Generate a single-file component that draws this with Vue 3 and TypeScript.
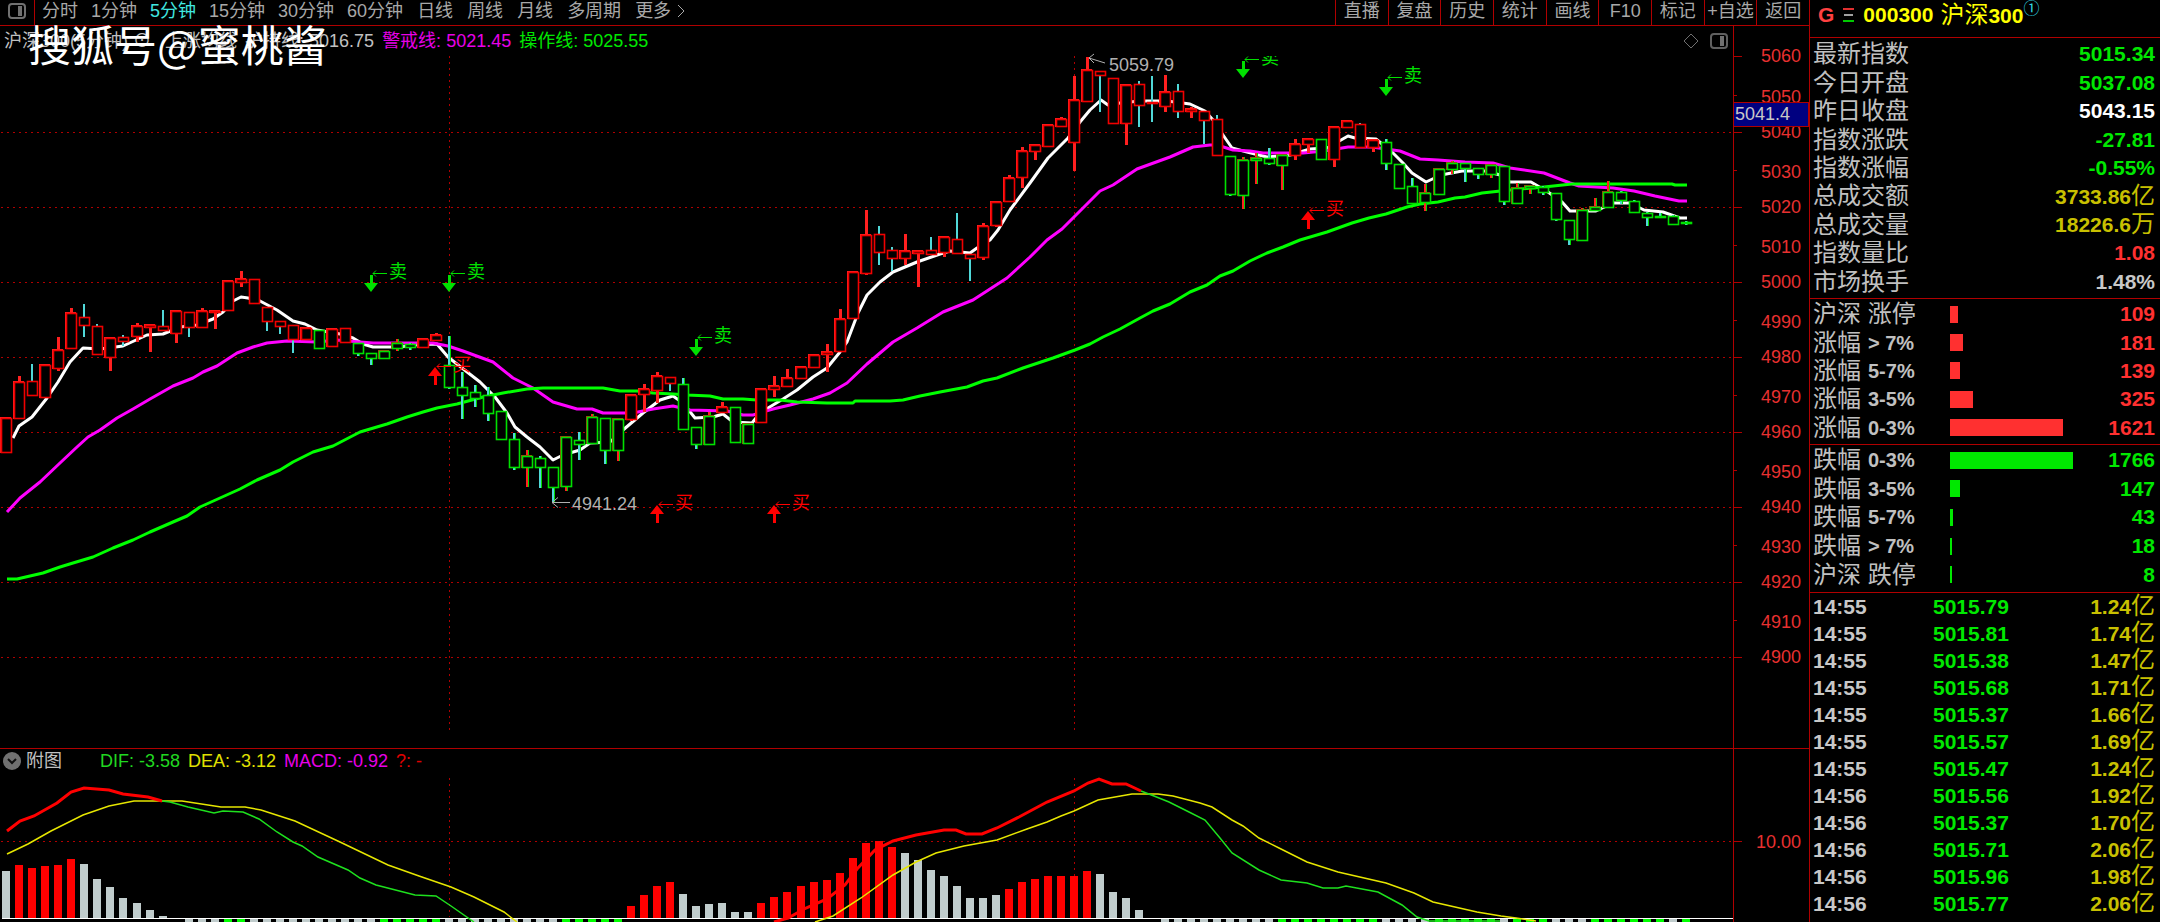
<script setup lang="ts">
type Kind = 'rr' | 'rc' | 'gc' | 'gr'
type Candle = [top: number, bottom: number, high: number, low: number, kind: Kind]
type Tone = 'up' | 'down'

const periodsShort = ['分时', '1分钟', '5分钟', '15分钟', '30分钟', '60分钟']
const periodsLong = ['日线', '周线', '月线', '多周期']
const tools = ['直播', '复盘', '历史', '统计', '画线', 'F10', '标记', '+自选', '返回']

const step = 13.02
const cx = (i: number): number => Math.round(6.3 + i * step)

const candles: Candle[] = [
  [418, 452, 417, 452, 'rr'], [382, 418, 376, 418, 'rr'], [381, 395, 364, 395, 'rc'], [365, 397, 364, 397, 'rr'],
  [350, 368, 337, 371, 'rr'], [313, 348, 308, 348, 'rr'], [317, 325, 304, 337, 'rc'], [326, 354, 324, 354, 'rc'],
  [338, 357, 337, 371, 'rr'], [337, 341, 335, 346, 'rc'], [326, 336, 323, 342, 'rr'], [325, 327, 325, 352, 'rr'],
  [326, 330, 310, 330, 'rc'], [311, 333, 311, 343, 'rr'], [312, 327, 312, 337, 'rc'], [311, 327, 308, 327, 'rr'],
  [311, 312, 311, 329, 'rr'], [281, 310, 281, 310, 'rr'], [279, 282, 271, 287, 'rr'], [279, 303, 279, 303, 'rc'],
  [307, 321, 307, 331, 'rc'], [321, 326, 321, 334, 'rc'], [325, 339, 325, 353, 'rc'], [328, 339, 328, 339, 'rr'],
  [330, 348, 330, 348, 'gc'], [329, 346, 329, 347, 'rr'], [328, 342, 328, 342, 'rc'], [343, 353, 343, 356, 'gc'],
  [353, 358, 353, 365, 'gc'], [351, 358, 350, 358, 'gr'], [343, 348, 339, 351, 'gr'], [344, 347, 343, 350, 'gc'],
  [339, 347, 339, 348, 'rr'], [335, 340, 333, 340, 'rr'], [365, 387, 336, 389, 'gc'], [387, 395, 372, 419, 'gc'],
  [392, 398, 385, 407, 'gc'], [395, 413, 387, 421, 'gc'], [411, 439, 411, 439, 'gc'], [439, 467, 433, 470, 'gc'],
  [456, 467, 450, 487, 'gr'], [458, 467, 456, 488, 'gc'], [467, 487, 467, 503, 'gc'], [437, 486, 436, 491, 'gr'],
  [440, 444, 432, 460, 'gc'], [417, 443, 414, 443, 'gr'], [418, 450, 418, 464, 'gc'], [419, 450, 418, 461, 'gr'],
  [395, 419, 394, 421, 'rr'], [389, 394, 384, 412, 'rr'], [376, 390, 372, 403, 'rr'], [377, 383, 377, 391, 'rc'],
  [384, 429, 378, 429, 'gc'], [427, 444, 427, 449, 'gc'], [416, 444, 412, 444, 'gr'], [407, 412, 402, 412, 'rr'],
  [407, 442, 407, 443, 'gc'], [424, 443, 424, 444, 'gr'], [389, 422, 388, 422, 'rr'], [386, 389, 376, 397, 'rr'],
  [378, 386, 369, 386, 'rr'], [367, 378, 366, 379, 'rr'], [355, 367, 354, 367, 'rr'], [352, 354, 344, 372, 'rr'],
  [319, 351, 309, 351, 'rr'], [272, 318, 271, 318, 'rr'], [235, 273, 210, 275, 'rr'], [234, 252, 226, 265, 'rc'],
  [250, 258, 247, 271, 'rc'], [251, 258, 234, 265, 'rr'], [251, 253, 251, 287, 'rr'], [250, 254, 237, 254, 'rc'],
  [237, 252, 236, 257, 'rr'], [239, 253, 213, 253, 'rc'], [254, 258, 254, 281, 'rc'], [226, 257, 223, 260, 'rr'],
  [202, 225, 201, 227, 'rr'], [178, 201, 175, 201, 'rr'], [151, 177, 147, 188, 'rr'], [145, 151, 144, 160, 'rr'],
  [125, 146, 124, 146, 'rr'], [119, 126, 117, 126, 'rr'], [100, 142, 76, 171, 'rr'], [70, 101, 57, 101, 'rr'],
  [71, 75, 71, 112, 'rc'], [78, 123, 78, 123, 'rc'], [85, 123, 84, 145, 'rr'], [84, 105, 81, 127, 'rc'],
  [102, 103, 76, 122, 'rc'], [92, 106, 75, 112, 'rr'], [91, 111, 84, 118, 'rc'], [109, 111, 107, 118, 'rr'],
  [111, 120, 111, 144, 'rc'], [119, 155, 115, 155, 'rc'], [156, 194, 156, 196, 'gc'], [160, 195, 157, 209, 'gr'],
  [158, 160, 153, 184, 'gr'], [158, 163, 148, 165, 'gc'], [155, 165, 155, 190, 'gr'], [144, 155, 139, 160, 'rr'],
  [139, 144, 138, 153, 'rr'], [139, 159, 139, 159, 'gc'], [127, 159, 126, 167, 'rr'], [121, 127, 120, 127, 'rr'],
  [124, 147, 123, 147, 'rc'], [140, 147, 140, 152, 'rr'], [142, 163, 139, 170, 'gc'], [164, 188, 164, 188, 'gc'],
  [186, 203, 178, 203, 'gc'], [193, 202, 184, 211, 'gr'], [169, 194, 168, 194, 'gr'], [163, 169, 161, 174, 'gr'],
  [163, 168, 163, 182, 'gc'], [168, 174, 168, 179, 'gc'], [165, 174, 164, 178, 'gr'], [166, 201, 166, 205, 'gc'],
  [188, 203, 183, 203, 'gr'], [186, 188, 185, 194, 'gr'], [187, 192, 186, 195, 'gc'], [193, 219, 193, 221, 'gc'],
  [220, 239, 220, 245, 'gc'], [210, 240, 208, 240, 'gr'], [207, 210, 198, 210, 'gr'], [192, 207, 181, 207, 'gr'],
  [192, 200, 191, 204, 'gc'], [201, 212, 200, 212, 'gc'], [213, 217, 212, 226, 'gc'], [216, 217, 213, 217, 'gc'],
  [216, 224, 215, 224, 'gc'], [222, 223, 221, 225, 'gc'],
]

const warnLine =
  '7,512 20,498 40,482 60,463 77,447 88,437 100,430 117,418 133,409 150,399 173,386 193,378 203,372 217,366 237,353 253,347 267,343 287,341 317,342 337,340 360,342 373,343 433,343 448,346 463,351 493,362 513,378 533,388 553,402 577,409 592,409 603,413 633,413 653,409 673,406 690,410 727,411 743,415 753,415 773,409 790,405 813,399 830,393 847,383 867,364 893,342 917,328 943,312 973,300 1007,278 1030,257 1047,240 1062,229 1075,216 1100,191 1113,185 1137,169 1170,157 1193,147 1210,145 1217,145 1233,150 1250,151 1263,153 1303,153 1324,151 1348,147 1372,147 1400,151 1420,159 1438,160 1465,162 1493,163 1510,168 1544,173 1570,183 1579,186 1613,188 1634,191 1655,196 1679,201 1687,201'
const actLine =
  '7,579 17,579 43,573 60,567 73,563 93,557 113,548 133,540 150,532 173,522 187,516 200,507 220,498 240,489 257,480 280,470 293,462 313,452 333,446 360,432 387,424 407,417 423,412 437,408 457,404 483,397 503,393 527,389 543,388 603,388 620,391 637,391 653,393 673,394 687,395 710,396 723,399 743,399 757,400 780,400 797,402 827,403 853,403 855,401 890,401 903,400 920,396 940,392 967,387 983,381 997,378 1023,368 1053,358 1075,350 1090,344 1103,337 1120,329 1140,318 1153,311 1170,304 1190,292 1207,285 1220,276 1233,271 1250,261 1267,253 1283,247 1300,240 1327,232 1352,223 1369,218 1386,214 1407,207 1420,204 1438,202 1455,198 1465,197 1482,193 1510,190 1544,187 1572,184 1672,184 1675,185 1687,185'
const holdLine =
  '13,438 19,426 32,417 47,398 58,382 70,362 83,348 100,349 123,346 147,335 163,334 180,327 197,325 213,319 223,312 233,301 241,297 248,298 260,301 277,310 293,321 305,324 317,330 340,334 353,338 363,344 373,347 400,347 413,345 437,344 448,357 462,368 480,382 495,397 507,413 515,427 527,437 540,447 553,460 563,455 580,450 590,443 610,442 623,430 643,413 660,400 673,396 683,403 695,418 713,417 723,414 733,422 752,423 760,413 773,405 783,399 797,390 813,377 827,368 840,352 847,342 858,313 867,295 880,282 893,272 917,262 940,254 950,251 970,253 977,248 990,240 998,230 1010,210 1030,183 1048,158 1068,138 1080,122 1090,110 1101,100 1108,105 1120,103 1140,101 1167,101 1190,104 1205,111 1213,120 1223,135 1232,148 1247,152 1267,157 1290,155 1310,149 1327,148 1341,140 1348,136 1355,138 1376,139 1393,153 1403,163 1412,173 1426,182 1441,175 1462,171 1486,171 1500,175 1510,182 1531,182 1548,192 1562,202 1570,211 1596,211 1613,203 1630,203 1644,210 1663,212 1680,218 1687,218'

const prices = Array.from({ length: 17 }, (_, k) => {
  const major = k % 2 === 0
  const y = k === 0 ? 56 : Math.round(57 + k * 37.5)
  return { label: 5060 - k * 10, y, major, textY: y + (major ? 6 : 8) }
})
const gridRows = prices.filter((p) => p.major && p.label < 5060)

const sells = [{ x: 371, y: 273 }, { x: 449, y: 273 }, { x: 696, y: 337 }, { x: 1243, y: 59 }, { x: 1386, y: 77 }]
const buys = [{ x: 435, y: 366 }, { x: 657, y: 504 }, { x: 774, y: 504 }, { x: 1308, y: 210 }]

/* Positive bars by index; r = growing, w = shrinking */
const macdTops: [number, number, string][] = [
  [0, 871, 'w'], [1, 865, 'r'], [2, 868, 'r'], [3, 866, 'r'], [4, 865, 'r'], [5, 859, 'r'], [6, 864, 'w'], [7, 879, 'w'],
  [8, 887, 'w'], [9, 898, 'w'], [10, 903, 'w'], [11, 910, 'w'], [12, 916, 'w'],
  [48, 906, 'r'], [49, 895, 'r'], [50, 886, 'r'], [51, 882, 'r'], [52, 894, 'w'], [53, 906, 'w'], [54, 904, 'w'],
  [55, 903, 'w'], [56, 912, 'w'], [57, 912, 'w'], [58, 903, 'r'], [59, 897, 'r'], [60, 892, 'r'], [61, 886, 'r'],
  [62, 882, 'r'], [63, 880, 'r'], [64, 873, 'r'], [65, 858, 'r'], [66, 843, 'r'], [67, 841, 'r'], [68, 847, 'r'],
  [69, 853, 'w'], [70, 860, 'w'], [71, 870, 'w'], [72, 876, 'w'], [73, 886, 'w'], [74, 898, 'w'], [75, 898, 'w'],
  [76, 895, 'w'], [77, 889, 'r'], [78, 882, 'r'], [79, 879, 'r'], [80, 876, 'r'], [81, 876, 'r'], [82, 876, 'r'],
  [83, 871, 'r'], [84, 874, 'w'], [85, 892, 'w'], [86, 898, 'w'], [87, 910, 'w'],
]
const greenRuns: [number, number][] = [[17, 18], [29, 33], [43, 47], [98, 105], [110, 114], [116, 118], [122, 127], [129, 129]]
const positive = new Set(macdTops.map((b) => b[0]))
const negatives = candles
  .map((_, i) => i)
  .filter((i) => !positive.has(i) && i !== 13 && i !== 88)
  .map((i) => ({ i, tone: greenRuns.some(([a, b]) => i >= a && i <= b) ? 'g' : 'w' }))

const difRed = [
  '7,831 20,821 34,816 57,803 71,792 84,788 109,790 123,794 148,797 162,801',
  '774,922 788,918 806,908 827,899 845,885 857,869 875,850 893,841 916,835 944,830 956,830 966,834 982,834 997,828 1019,817 1047,802 1074,791 1088,783 1099,779 1112,784 1126,784 1141,791',
]
const difGreen = [
  '162,801 170,802 188,807 214,813 223,811 243,812 259,819 277,832 293,842 302,846 318,857 348,870 360,878 376,885 415,895 436,896 451,906 474,922',
  '1141,791 1154,796 1169,802 1189,812 1205,820 1220,838 1232,853 1259,870 1281,880 1307,883 1323,888 1338,888 1346,886 1378,892 1402,905 1417,917 1429,921 1500,921',
]
const dea = [
  '7,854 28,844 51,831 83,815 109,806 134,801 182,801 221,807 245,807 261,810 295,821 340,842 388,865 419,876 451,887 474,897 504,912 517,922',
  '815,922 833,916 861,898 893,875 916,862 936,853 964,846 997,840 1027,829 1047,822 1061,816 1074,811 1098,800 1132,794 1158,794 1173,796 1200,803 1212,807 1232,820 1243,826 1259,838 1279,848 1307,862 1338,872 1386,883 1414,893 1433,902 1477,912 1501,916 1516,918 1536,921',
]

const quotes = [
  { name: '最新指数', value: '5015.34', unit: '', tone: 'down' },
  { name: '今日开盘', value: '5037.08', unit: '', tone: 'down' },
  { name: '昨日收盘', value: '5043.15', unit: '', tone: 'white' },
  { name: '指数涨跌', value: '-27.81', unit: '', tone: 'down' },
  { name: '指数涨幅', value: '-0.55%', unit: '', tone: 'down' },
  { name: '总成交额', value: '3733.86', unit: '亿', tone: 'gold' },
  { name: '总成交量', value: '18226.6', unit: '万', tone: 'gold' },
  { name: '指数量比', value: '1.08', unit: '', tone: 'up' },
  { name: '市场换手', value: '1.48%', unit: '', tone: 'grey' },
]

interface Band { name: string; range: string; count: number }
const bands: { tone: Tone; rows: Band[] }[] = [
  {
    tone: 'up',
    rows: [
      { name: '沪深 涨停', range: '', count: 109 },
      { name: '涨幅', range: '> 7%', count: 181 },
      { name: '涨幅', range: '5-7%', count: 139 },
      { name: '涨幅', range: '3-5%', count: 325 },
      { name: '涨幅', range: '0-3%', count: 1621 },
    ],
  },
  {
    tone: 'down',
    rows: [
      { name: '跌幅', range: '0-3%', count: 1766 },
      { name: '跌幅', range: '3-5%', count: 147 },
      { name: '跌幅', range: '5-7%', count: 43 },
      { name: '跌幅', range: '> 7%', count: 18 },
      { name: '沪深 跌停', range: '', count: 8 },
    ],
  },
]
const barWidth = (count: number): string => `${(count / 1766) * 100}%`

const ticks: [string, string, string][] = [
  ['14:55', '5015.79', '1.24'], ['14:55', '5015.81', '1.74'], ['14:55', '5015.38', '1.47'], ['14:55', '5015.68', '1.71'],
  ['14:55', '5015.37', '1.66'], ['14:55', '5015.57', '1.69'], ['14:55', '5015.47', '1.24'], ['14:56', '5015.56', '1.92'],
  ['14:56', '5015.37', '1.70'], ['14:56', '5015.71', '2.06'], ['14:56', '5015.96', '1.98'], ['14:56', '5015.77', '2.06'],
]
</script>

<template>
  <div class="terminal">
    <main class="main">
      <nav class="toolbar">
        <button class="layout-btn" type="button" aria-label="布局">
          <svg width="18" height="16" viewBox="0 0 18 16">
            <rect x="1" y="1" width="16" height="14" rx="3" fill="none" stroke="#707070" stroke-width="2" />
            <rect x="10" y="3" width="4" height="10" fill="#707070" />
          </svg>
        </button>
        <div class="periods">
          <button v-for="p in periodsShort" :key="p" type="button" :class="{ active: p === '5分钟' }">{{ p }}</button>
        </div>
        <div class="periods long">
          <button v-for="p in periodsLong" :key="p" type="button">{{ p }}</button>
          <button class="more" type="button">
            更多
            <svg width="8" height="14" viewBox="0 0 8 14"><path d="M1 1 7 7 1 13" fill="none" stroke="currentColor" /></svg>
          </button>
        </div>
        <div class="tools">
          <button v-for="t in tools" :key="t" type="button">{{ t }}</button>
        </div>
      </nav>

      <section class="chart">
        <header class="chart-head">
          <span class="title">沪深300(5分钟) ⊙</span>
          <span>上涨均线</span>
          <span>护持线: 5016.75</span>
          <span class="magenta">警戒线: 5021.45</span>
          <span class="lime">操作线: 5025.55</span>
          <span class="head-icons">
            <svg width="16" height="16" viewBox="0 0 16 16"><path d="M8 1 15 8 8 15 1 8Z" fill="none" stroke="#707070" /></svg>
            <svg width="18" height="16" viewBox="0 0 18 16">
              <rect x="1" y="1" width="16" height="14" rx="3" fill="none" stroke="#606060" stroke-width="2" />
              <rect x="10" y="3" width="4" height="10" fill="#707070" />
            </svg>
          </span>
          <div class="watermark">搜狐号@蜜桃酱</div>
        </header>
        <svg class="plot" viewBox="0 56 1809 692" role="img" aria-label="K线图">
          <defs><clipPath id="plot-clip"><rect x="0" y="56" width="1733" height="692" /></clipPath></defs>
          <g class="grid">
            <line v-for="g in gridRows" :key="g.label" x1="1" :y1="g.y + 0.5" x2="1733" :y2="g.y + 0.5" />
            <line x1="449.5" y1="56" x2="449.5" y2="732" />
            <line x1="1074.5" y1="56" x2="1074.5" y2="732" />
          </g>
          <g class="curves">
            <polyline :points="holdLine" stroke="#fff" />
            <polyline :points="warnLine" stroke="#f0f" />
            <polyline :points="actLine" stroke="#0f0" />
          </g>
          <g class="candles">
            <g v-for="(c, i) in candles" :key="i" :class="c[4]">
              <rect class="wick" :x="cx(i) - 1" :y="c[2]" width="2" :height="Math.max(c[3] - c[2], 1)" />
              <rect class="wick-edge" :x="cx(i) + 1" :y="c[2]" width="1" :height="Math.max(c[3] - c[2], 1)" />
              <rect class="accent" :x="cx(i) - 6" :y="c[0] - 1" width="11" :height="c[1] - c[0] + 2" />
              <rect class="body" :x="cx(i) - 4.5" :y="c[0] + 0.5" width="10" :height="Math.max(c[1] - c[0], 1)" />
            </g>
          </g>
          <g clip-path="url(#plot-clip)">
            <g v-for="s in sells" :key="s.x" class="sell">
              <path :d="`M${s.x - 1} ${s.y + 2}h3v8h5l-7 9-7-9h6z`" />
              <path class="pointer" :d="`M${s.x + 16} ${s.y + 0.5}h-14m3-3l-3 3 3 3`" />
              <text :x="s.x + 18" :y="s.y + 5">卖</text>
            </g>
            <g v-for="b in buys" :key="b.x" class="buy">
              <path :d="`M${b.x - 1} ${b.y + 19}h3v-9h5l-7-9-7 9h6z`" />
              <path class="pointer" :d="`M${b.x + 16} ${b.y + 0.5}h-14m3-3l-3 3 3 3`" />
              <text :x="b.x + 18" :y="b.y + 5">买</text>
            </g>
          </g>
          <g class="extreme">
            <path d="M1105 63 1089 58m5-4-5 4 5 5" />
            <text x="1109" y="71">5059.79</text>
            <path d="M570 502.5H552m6-5-6 5 6 5" />
            <text x="572" y="510">4941.24</text>
          </g>
          <g class="axis">
            <line x1="1733.5" y1="26" x2="1733.5" y2="748" />
            <g v-for="p in prices" :key="p.label">
              <line x1="1734" :y1="p.y + 0.5" :x2="p.major ? 1742 : 1737" :y2="p.y + 0.5" />
              <text x="1801" :y="p.textY">{{ p.label }}</text>
            </g>
            <rect class="cursor-bg" x="1733.5" y="102.5" width="75" height="24" />
            <text class="cursor-text" x="1735" y="120">5041.4</text>
          </g>
        </svg>
      </section>

      <section class="chart sub">
        <header class="chart-head">
          <button class="fold" type="button">
            <svg width="18" height="18" viewBox="0 0 18 18">
              <circle cx="9" cy="9" r="9" fill="#707070" />
              <path d="M5 7 9 11 13 7" fill="none" stroke="#101010" stroke-width="2" />
            </svg>
            附图
          </button>
          <span class="dif">DIF: -3.58</span>
          <span class="yellow">DEA: -3.12</span>
          <span class="magenta">MACD: -0.92</span>
          <span class="red">?: -</span>
        </header>
        <svg class="plot" viewBox="0 776 1809 146" role="img" aria-label="MACD">
          <g class="grid">
            <line x1="1" y1="841.5" x2="1733" y2="841.5" />
            <line x1="449.5" y1="778" x2="449.5" y2="917" />
            <line x1="1074.5" y1="778" x2="1074.5" y2="917" />
          </g>
          <g class="hist">
            <rect v-for="b in macdTops" :key="b[0]" :class="b[2]" :x="cx(b[0]) - 4" :y="b[1]" width="8" :height="918 - b[1]" />
            <rect v-for="n in negatives" :key="n.i" :class="n.tone" :x="cx(n.i) - 4" y="919" width="8" height="3" />
            <rect class="zero" x="2" y="918" width="1731" height="1" />
          </g>
          <g class="thin">
            <polyline v-for="d in dea" :key="d" :points="d" stroke="#e6e600" />
            <polyline v-for="d in difGreen" :key="d" :points="d" stroke="#1ee01e" />
            <polyline v-for="d in difRed" :key="d" class="thick" :points="d" stroke="#f00" />
          </g>
          <g class="axis">
            <line x1="1733.5" y1="749" x2="1733.5" y2="922" />
            <line x1="1734" y1="841.5" x2="1742" y2="841.5" />
            <text x="1801" y="848">10.00</text>
          </g>
        </svg>
      </section>
    </main>

    <aside class="panel">
      <h1 class="symbol">
        <span class="flag">G</span>
        <svg width="11" height="14" viewBox="0 0 11 14">
          <path d="M0 1H11" stroke="#e03030" stroke-width="2" />
          <path d="M1 7H10" stroke="#a0a0a0" stroke-width="2" />
          <path d="M0 13H11" stroke="#00c800" stroke-width="2" />
        </svg>
        <span class="code">000300</span>
        <span class="name"><span class="cjk">沪深</span>300</span>
        <sup>①</sup>
      </h1>

      <dl class="quotes block">
        <div v-for="q in quotes" :key="q.name" class="row">
          <dt class="cjk">{{ q.name }}</dt>
          <dd :class="q.tone">{{ q.value }}<span v-if="q.unit" class="cjk">{{ q.unit }}</span></dd>
        </div>
      </dl>

      <dl v-for="group in bands" :key="group.tone" class="bands block">
        <div v-for="b in group.rows" :key="b.name + b.range" class="row">
          <dt><span class="cjk">{{ b.name }}</span><span v-if="b.range" class="range">{{ b.range }}</span></dt>
          <dd class="track"><span class="bar" :class="group.tone" :style="{ width: barWidth(b.count) }"></span></dd>
          <dd :class="group.tone">{{ b.count }}</dd>
        </div>
      </dl>

      <table class="ticks">
        <tbody>
          <tr v-for="(t, i) in ticks" :key="i">
            <td class="grey">{{ t[0] }}</td>
            <td class="down">{{ t[1] }}</td>
            <td class="gold vol">{{ t[2] }}<span class="cjk">亿</span></td>
          </tr>
        </tbody>
      </table>
    </aside>
  </div>
</template>

<style>
body {
  margin: 0;
  background: #000;
}
</style>

<style scoped>
.terminal {
  display: flex;
  min-height: 100vh;
  overflow: hidden;
  background: #000;
  color: #c0c0c0;
  font-family: "Liberation Sans", "Noto Sans CJK SC", sans-serif;
  font-size: 18px;
}
button {
  padding: 0;
  border: 0;
  background: none;
  color: inherit;
  font: inherit;
  white-space: nowrap;
  cursor: pointer;
}
.main {
  flex: 1;
  min-width: 0;
}
.toolbar {
  display: flex;
  box-sizing: border-box;
  height: 26px;
  border-bottom: 1px solid #b00000;
  color: #a8a8a8;
  line-height: 22px;
}
.layout-btn {
  display: flex;
  align-items: center;
  justify-content: center;
  width: 35px;
  padding-bottom: 4px;
  border-right: 1px solid #b00000;
}
.periods {
  display: flex;
  gap: 13px;
  padding-left: 7px;
}
.periods.long {
  gap: 14px;
  padding-left: 14px;
}
.periods button {
  height: 22px;
}
.periods .active {
  color: #40e8e0;
}
.more {
  display: flex;
  gap: 6px;
  align-items: center;
}
.tools {
  display: grid;
  grid-template-columns: repeat(9, 1fr);
  width: 474px;
  margin-left: auto;
}
.tools button {
  height: 25px;
  padding-bottom: 4px;
  border-left: 1px solid #b00000;
}
.chart-head {
  position: relative;
  display: flex;
  gap: 8px;
  align-items: center;
  height: 30px;
  padding-left: 4px;
  line-height: 26px;
  white-space: nowrap;
}
.title {
  margin-right: 6px;
}
.head-icons {
  display: flex;
  gap: 11px;
  align-items: center;
  margin-right: 81px;
  margin-left: auto;
}
.watermark {
  position: absolute;
  top: -3px;
  left: 28px;
  color: #fff;
  font-family: "Noto Sans CJK SC", sans-serif;
  font-size: 43px;
  line-height: 40px;
  z-index: 1;
}
.sub {
  border-top: 1px solid #b00000;
}
.sub .chart-head {
  box-sizing: border-box;
  height: 27px;
  padding-bottom: 3px;
  padding-left: 3px;
  line-height: 24px;
}
.fold {
  display: flex;
  gap: 5px;
  align-items: center;
  margin-right: 30px;
}
.plot {
  display: block;
  width: 100%;
  height: auto;
  overflow: visible;
}
.magenta { color: #e800e8; }
.lime { color: #00e800; }
.dif { color: #20d820; }
.yellow { color: #e0e000; }
.red { color: #e00000; }
.grid line {
  stroke: #b00000;
  stroke-dasharray: 2 4;
  shape-rendering: crispEdges;
}
.curves polyline {
  fill: none;
  stroke-width: 3;
  stroke-linejoin: round;
}
.thin polyline {
  fill: none;
  stroke-width: 1.5;
}
.thin .thick {
  stroke-width: 3;
}
.wick,
.wick-edge,
.accent,
.hist rect {
  shape-rendering: crispEdges;
}
.body {
  fill: #000;
  stroke-width: 1.6;
}
.rr .body, .rc .body { stroke: #f00000; }
.gc .body, .gr .body { stroke: #00e000; }
.rr .wick, .rr .wick-edge, .gr .wick { fill: #ff2020; }
.rc .wick, .gc .wick { fill: #50d8d8; }
.rc .wick-edge { fill: none; }
.gc .wick-edge, .gr .wick-edge { fill: #00d800; }
.accent { fill: none; }
.rr .accent { fill: #ff2020; }
.gr .accent { fill: #b03010; }
.sell { fill: #00e000; }
.buy { fill: #f00; }
.pointer { fill: none; }
.sell .pointer { stroke: #00e000; }
.buy .pointer { stroke: #f00; }
.extreme { fill: #b0b0b0; }
.extreme path {
  fill: none;
  stroke: #b0b0b0;
}
.axis line { stroke: #b00000; }
.axis text {
  fill: #e83030;
  text-anchor: end;
}
.axis .cursor-bg {
  fill: #000080;
  stroke: #b00000;
}
.axis .cursor-text {
  fill: #c8c8c8;
  text-anchor: start;
}
.hist .r { fill: #f00; }
.hist .w { fill: #c0cccc; }
.hist .g { fill: #0f0; }
.hist .zero { fill: #fff; }

.panel {
  flex: none;
  box-sizing: border-box;
  width: 351px;
  border-left: 1px solid #b00000;
  font-size: 21px;
  font-weight: 700;
}
.cjk {
  font-size: 24px;
  font-weight: 400;
}
.symbol {
  display: flex;
  align-items: center;
  box-sizing: border-box;
  height: 38px;
  margin: 0;
  padding: 0 0 7px 8px;
  border-bottom: 1px solid #b00000;
  color: #ff0;
  font-size: 21px;
  line-height: 30px;
}
.flag {
  margin-right: 9px;
  color: #ff4040;
}
.code {
  margin: 0 7px 0 9px;
}
.symbol sup {
  align-self: flex-start;
  color: #30d8e0;
  font-size: 16px;
  font-weight: 400;
  line-height: 18px;
}
.block {
  display: grid;
  grid-auto-rows: minmax(0, 1fr);
  box-sizing: border-box;
  margin: 0;
  padding: 2px 5px 2px 3px;
  border-bottom: 1px solid #b00000;
}
.quotes {
  height: 261px;
}
.bands {
  height: 146px;
  padding-top: 1px;
}
.bands + .bands {
  height: 148px;
  padding-bottom: 3px;
}
.row {
  display: flex;
  align-items: center;
  line-height: 28px;
}
.row dt,
.row dd {
  margin: 0;
  white-space: nowrap;
}
.row dd:last-child {
  margin-left: auto;
}
.bands dt {
  display: flex;
  align-items: center;
  width: 137px;
}
.range {
  margin-left: 7px;
  font-size: 20px;
}
.row .track {
  width: 123px;
}
.bar {
  display: block;
  min-width: 2px;
  height: 17px;
}
.bar.up { background: #ff3030; }
.bar.down { background: #00e800; }
.up { color: #ff3030; }
.down { color: #00e800; }
.white { color: #fff; }
.grey { color: #c8c8c8; }
.gold { color: #c8c000; }
.ticks {
  width: 100%;
  border-spacing: 0;
  line-height: 27px;
}
.ticks tr {
  height: 27px;
}
.ticks td {
  height: 27px;
  padding: 0;
}
.ticks td:first-child {
  width: 120px;
  padding-left: 3px;
}
.ticks .vol {
  padding-right: 5px;
  text-align: right;
}
.ticks .cjk {
  line-height: 20px;
}
</style>
